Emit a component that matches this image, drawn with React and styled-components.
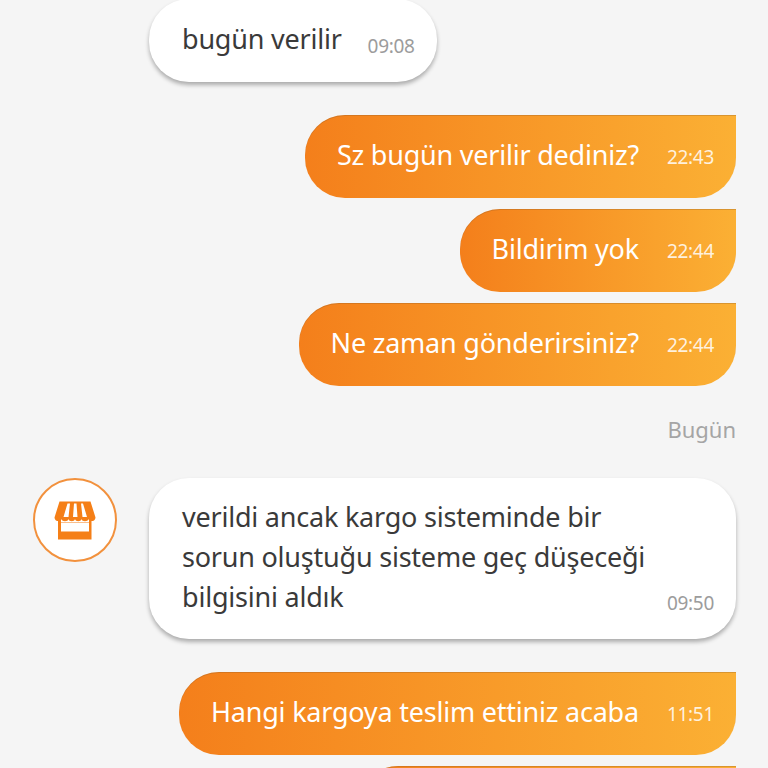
import React from 'react'
import styled, { createGlobalStyle } from 'styled-components'

const GlobalStyle = createGlobalStyle`
  html, body {
    margin: 0;
    padding: 0;
    background: #f5f5f5;
  }
  body {
    font-family: "Noto Sans", "Open Sans", sans-serif;
  }
`

const StoreIcon = () => (
  <svg width="42" height="39" viewBox="0 0 42 39">
    <path
      d="M5.5 0.5H36.5L41.5 16.5C41.5 21 35 21 34.5 18C34 21 28 21 27.5 18C27 21 21.5 21 21 18C20.5 21 15 21 14.5 18C14 21 8 21 7.5 18C7 21 0.5 21 0.5 16.5Z"
      fill="#f57f17"
    />
    <path d="M13.5 2.5H16L14.5 16H9.5Z M20 2.5H22.5L23.5 16H19Z M27 2.5H29L33 16H28.5Z" fill="#fff" />
    <path d="M4 19V38.5H37.5V19H35V21H7V19Z" fill="#f57f17" />
    <path d="M7 21.5H35V30.5H7Z" fill="#fff" />
  </svg>
)

export default function App() {
  return (
    <>
      <GlobalStyle />
      <Screen>
        <Thread>
          <Incoming>
            <AvatarSlot />
            <Bubble>
              <Text>bugün verilir</Text>
              <ReceivedTime>09:08</ReceivedTime>
            </Bubble>
          </Incoming>

          <Group>
            <Outgoing>
              <SentBubble>
                <Text>Sz bugün verilir dediniz?</Text>
                <Time>22:43</Time>
              </SentBubble>
            </Outgoing>
            <Outgoing>
              <SentBubble>
                <Text>Bildirim yok</Text>
                <Time>22:44</Time>
              </SentBubble>
            </Outgoing>
            <Outgoing>
              <SentBubble>
                <Text>Ne zaman gönderirsiniz?</Text>
                <Time>22:44</Time>
              </SentBubble>
            </Outgoing>
          </Group>

          <DayLabel>Bugün</DayLabel>

          <Incoming>
            <Avatar>
              <StoreIcon />
            </Avatar>
            <LongBubble>
              <Text>
                verildi ancak kargo sisteminde bir
                <br />
                sorun oluştuğu sisteme geç düşeceği
                <br />
                bilgisini aldık
              </Text>
              <LongTime>09:50</LongTime>
            </LongBubble>
          </Incoming>

          <Group>
            <Outgoing>
              <SentBubble>
                <Text>Hangi kargoya teslim ettiniz acaba</Text>
                <Time>11:51</Time>
              </SentBubble>
            </Outgoing>
            <Outgoing>
              <NextBubble />
            </Outgoing>
          </Group>
        </Thread>
      </Screen>
    </>
  )
}

const Screen = styled.div`
  width: 768px;
  height: 768px;
  overflow: hidden;
  background: #f5f5f5;
`
const Thread = styled.div`
  display: flex;
  flex-direction: column;
  gap: 33px;
  padding: 0 32px 0 33px;
  margin-top: -1px;
`
const Group = styled.div`
  display: flex;
  flex-direction: column;
  gap: 11px;
`
const Incoming = styled.div`
  display: flex;
  align-items: flex-start;
  gap: 32px;
`
const Outgoing = styled.div`
  display: flex;
  justify-content: flex-end;
`
const AvatarSlot = styled.div`
  flex: none;
  width: 84px;
`
const Avatar = styled(AvatarSlot)`
  box-sizing: border-box;
  height: 84px;
  border: 2px solid #f2913d;
  border-radius: 50%;
  background: #fff;
  display: flex;
  align-items: center;
  justify-content: center;
`
const Bubble = styled.div`
  display: flex;
  align-items: center;
  gap: 26px;
  height: 83px;
  box-sizing: border-box;
  padding: 0 22px 4px 33px;
  background: #fff;
  color: #3a3a3a;
  border-radius: 40px;
  box-shadow: 0 3px 4px rgba(0, 0, 0, 0.3);
`
const LongBubble = styled(Bubble)`
  flex: 1;
  min-width: 0;
  height: 161px;
  gap: 0;
  align-items: flex-end;
  justify-content: space-between;
  padding: 19px 22px 22px 33px;
`
const SentBubble = styled.div`
  display: flex;
  align-items: center;
  gap: 28px;
  height: 83px;
  box-sizing: border-box;
  padding: 0 22px 4px 32px;
  color: #fff;
  background: linear-gradient(90deg, #f47f1b 0%, #fbb034 100%);
  border-radius: 40px 0 40px 40px;
  box-shadow: inset 0 1px 0 rgba(140, 90, 40, 0.3);
`
const NextBubble = styled(SentBubble)`
  width: 378px;
`
const Text = styled.div`
  font-size: 27px;
  line-height: 40px;
  letter-spacing: -0.22px;
  white-space: nowrap;
`
const Time = styled.span`
  flex: none;
  font-size: 19px;
  line-height: 24px;
  letter-spacing: -0.3px;
  color: rgba(255, 255, 255, 0.85);
  transform: translateY(2px);
`
const ReceivedTime = styled(Time)`
  color: #9c9c9c;
  transform: translateY(7px);
`
const LongTime = styled(ReceivedTime)`
  margin-bottom: 9px;
`
const DayLabel = styled.div`
  text-align: right;
  font-size: 22px;
  line-height: 30px;
  color: #a5a5a5;
  margin: -5px 0 1px;
`
